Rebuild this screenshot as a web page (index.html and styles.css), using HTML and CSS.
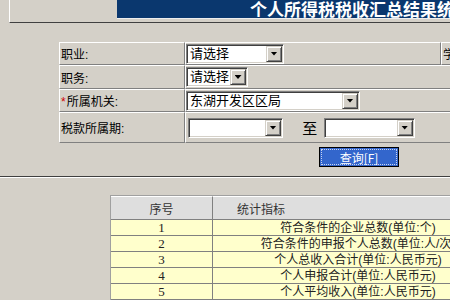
FILE: index.html
```html
<!DOCTYPE html>
<html lang="zh-CN">
<head>
    <meta charset="UTF-8">
    <title>个人所得税税收汇总结果统计</title>
    <link rel="stylesheet" href="styles.css">
</head>
<body>
    <div class="topbar">
        <div class="topbar-side"></div>
        <div class="banner"><span class="banner-title">个人所得税税收汇总结果统计</span></div>
    </div>

    <form class="query">
        <table class="query-table">
            <tr class="row-a">
                <td class="lbl">职业:</td>
                <td class="field field-short">
                    <span class="combo combo-w98"><span class="combo-text">请选择</span><span class="combo-btn"><i class="arrow"></i></span></span>
                </td>
                <td class="lbl extra">学历:</td>
            </tr>
            <tr class="row-b">
                <td class="lbl">职务:</td>
                <td class="field" colspan="2">
                    <span class="combo combo-w62"><span class="combo-text">请选择</span><span class="combo-btn"><i class="arrow"></i></span></span>
                </td>
            </tr>
            <tr class="row-a">
                <td class="lbl"><span class="req">*</span>所属机关:</td>
                <td class="field" colspan="2">
                    <span class="combo combo-w174"><span class="combo-text">东湖开发区区局</span><span class="combo-btn"><i class="arrow"></i></span></span>
                </td>
            </tr>
            <tr class="row-c">
                <td class="lbl">税款所属期:</td>
                <td class="field field-period" colspan="2">
                    <span class="combo combo-w95"><span class="combo-text"></span><span class="combo-btn"><i class="arrow"></i></span></span>
                    <span class="to">至</span>
                    <span class="combo combo-w91"><span class="combo-text"></span><span class="combo-btn"><i class="arrow"></i></span></span>
                </td>
            </tr>
        </table>
        <div class="actions">
            <button type="button" class="btn-query"><span class="focus">查询[F]</span></button>
        </div>
    </form>

    <div class="divider"></div>

    <table class="result">
        <thead>
            <tr>
                <th class="col-no">序号</th>
                <th class="col-name">统计指标</th>
            </tr>
        </thead>
        <tbody>
            <tr><td class="num">1</td><td>符合条件的企业总数(单位:个)</td></tr>
            <tr><td class="num">2</td><td>符合条件的申报个人总数(单位:人/次)</td></tr>
            <tr><td class="num">3</td><td>个人总收入合计(单位:人民币元)</td></tr>
            <tr><td class="num">4</td><td>个人申报合计(单位:人民币元)</td></tr>
            <tr><td class="num">5</td><td>个人平均收入(单位:人民币元)</td></tr>
            <tr><td class="num">6</td><td>个人平均申报(单位:人民币元)</td></tr>
        </tbody>
    </table>
</body>
</html>
```

FILE: styles.css
```css
body {
    margin: 0;
    background-color: #d4d0c8; /* classic window gray */
    font-family: "Liberation Sans", "Noto Sans CJK SC", sans-serif;
    font-size: 12px;
    color: #000;
    overflow: hidden;
}

/* title strip */
.topbar {
    display: flex;
    height: 22px;
    margin-left: 9px;
    border-left: 1px solid #fff;
    border-bottom: 1px solid #404040;
}
.topbar-side {
    width: 107px;
    flex: none;
}
.banner {
    flex: 1;
    height: 18px;
    background-color: #0a376e;
    border-bottom: 1px solid #eeeeee;
    overflow: hidden;
    white-space: nowrap;
}
.banner-title {
    display: block;
    padding-left: 133px;
    color: #fff;
    font-family: "Noto Sans CJK SC", sans-serif;
    font-weight: bold;
    font-size: 17px;
    line-height: 17px;
}

/* query form */
.query-table {
    margin: 19px 0 0 59px;
    border-collapse: separate;
    border-spacing: 0;
    width: 470px;
}
.query-table td {
    box-sizing: border-box;
    border-top: 1px solid #fff;
    border-left: 1px solid #fff;
    border-bottom: 1px solid #808080;
    border-right: 1px solid #808080;
    padding: 0;
    vertical-align: middle;
    white-space: nowrap;
}
.row-a td { height: 23px; }
.row-b td { height: 24px; }
.row-c td { height: 31px; }
.lbl {
    width: 126px;
    padding-left: 1px !important;
}
.field-short { width: 256px; }
.extra { width: 88px; }
.req {
    color: #d00000;
    margin-right: 1px;
}
.field-period { padding-left: 2px !important; }
.to {
    display: inline-block;
    margin: 0 3px 0 16px;
    font-size: 15px;
    vertical-align: middle;
}

/* win2000 style combo box */
.combo {
    display: inline-flex;
    box-sizing: border-box;
    height: 20px;
    vertical-align: middle;
    background-color: #fff;
    border: 1px solid;
    border-color: #808080 #fff #fff #808080;
    box-shadow: inset 1px 1px 0 #404040, inset -1px -1px 0 #d4d0c8;
    padding: 1px;
}
.combo-text {
    flex: 1;
    padding-left: 2px;
    line-height: 16px;
    font-size: 13px;
}
.combo-btn {
    box-sizing: border-box;
    width: 16px;
    height: 16px;
    background-color: #d4d0c8;
    border: 1px solid;
    border-color: #d4d0c8 #404040 #404040 #d4d0c8;
    box-shadow: inset 1px 1px 0 #fff, inset -1px -1px 0 #808080;
    display: flex;
    align-items: center;
    justify-content: center;
}
.arrow {
    display: block;
    width: 7px;
    height: 4px;
    background-color: #000;
    clip-path: polygon(0 0, 100% 0, 50% 100%);
}
.combo-w98 { width: 98px; }
.combo-w62 { width: 62px; }
.combo-w174 { width: 174px; }
.combo-w95 { width: 95px; }
.combo-w91 { width: 91px; }

.actions {
    padding: 4px 0 0 319px;
}
.btn-query {
    display: block;
    box-sizing: border-box;
    width: 80px;
    height: 20px;
    padding: 1px;
    border: 1px solid #000;
    background-color: #3366cc;
    color: #fff;
    font-family: "Noto Sans CJK SC", sans-serif;
    font-size: 12px;
    cursor: pointer;
}
.focus {
    display: block;
    height: 16px;
    line-height: 15px;
    border: 1px dotted #c8d4f0;
    box-sizing: border-box;
}

.divider {
    margin-top: 9px;
    border-top: 1px solid #404040;
    border-bottom: 1px solid #fff;
}

/* result grid */
.result {
    margin: 17px 0 0 110px;
    border-collapse: separate;
    border-spacing: 0;
    width: 394px;
    border-top: 1px solid #a0a0a0;
    border-left: 1px solid #a0a0a0;
    color: #222;
}
.result th, .result td {
    box-sizing: border-box;
    border-right: 1px solid #808080;
    border-bottom: 1px solid #808080;
    padding: 0;
    white-space: nowrap;
    font-weight: normal;
}
.result th {
    height: 24px;
    background-color: #dedede;
    border-top: 1px solid #fff;
    color: #333;
}
.col-no { width: 102px; }
.col-name {
    text-align: left;
    padding-left: 24px !important;
}
.result td {
    height: 16px;
    line-height: 14px;
    background-color: #ffffcc;
    text-align: center;
}
.num {
    font-family: "Liberation Serif", serif;
    font-size: 13px;
}
```
